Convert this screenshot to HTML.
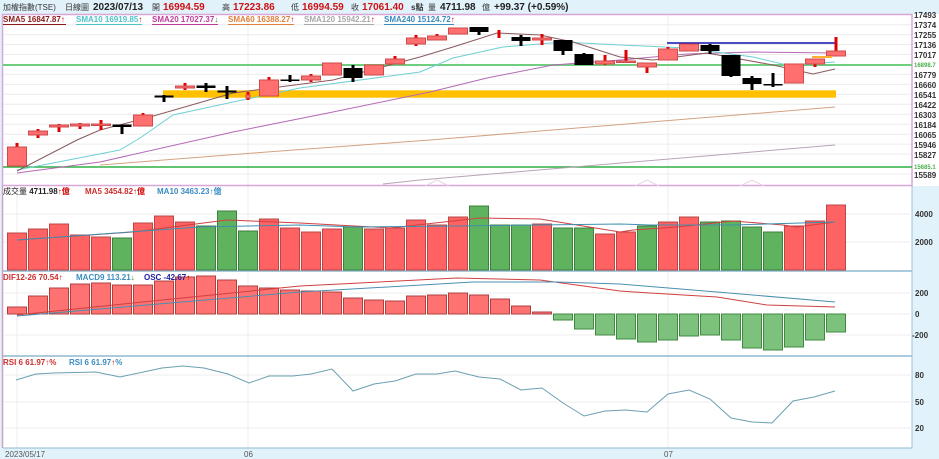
<!DOCTYPE html>
<html><head><meta charset="utf-8"><style>
body{margin:0;width:939px;height:459px;overflow:hidden;background:#e2f2fb;font-family:"Liberation Sans","Noto Sans CJK TC",sans-serif}
svg{position:absolute;left:0;top:0}
</style></head><body>
<svg width="939" height="459" viewBox="0 0 939 459" xmlns="http://www.w3.org/2000/svg" font-family="Liberation Sans, Noto Sans CJK TC, sans-serif">
<rect x="0" y="0" width="939" height="459" fill="#e2f2fb"/>
<rect x="3" y="14" width="936" height="172" fill="#fff"/>
<rect x="3" y="186" width="909" height="262" fill="#fff"/>
<line x1="912" y1="186" x2="912" y2="448" stroke="#9cc3d8" stroke-width="1"/>
<g stroke="#ececec" stroke-width="1">
<line x1="3" y1="24.7" x2="912" y2="24.7"/><line x1="3" y1="34.6" x2="912" y2="34.6"/><line x1="3" y1="44.6" x2="912" y2="44.6"/><line x1="3" y1="54.5" x2="912" y2="54.5"/><line x1="3" y1="74.4" x2="912" y2="74.4"/><line x1="3" y1="84.4" x2="912" y2="84.4"/><line x1="3" y1="94.3" x2="912" y2="94.3"/><line x1="3" y1="104.3" x2="912" y2="104.3"/><line x1="3" y1="114.3" x2="912" y2="114.3"/><line x1="3" y1="124.2" x2="912" y2="124.2"/><line x1="3" y1="134.2" x2="912" y2="134.2"/><line x1="3" y1="144.1" x2="912" y2="144.1"/><line x1="3" y1="154.1" x2="912" y2="154.1"/><line x1="3" y1="174" x2="912" y2="174"/>
<line x1="3" y1="214" x2="912" y2="214"/><line x1="3" y1="242" x2="912" y2="242"/>
<line x1="3" y1="293" x2="912" y2="293"/><line x1="3" y1="314" x2="912" y2="314"/><line x1="3" y1="335" x2="912" y2="335"/>
<line x1="3" y1="375" x2="912" y2="375"/><line x1="3" y1="402" x2="912" y2="402"/><line x1="3" y1="428" x2="912" y2="428"/>
<line x1="17" y1="186" x2="17" y2="448"/><line x1="248" y1="14" x2="248" y2="448"/><line x1="668" y1="14" x2="668" y2="448"/>
</g>
<rect x="2.5" y="14.5" width="909.5" height="171" fill="none" stroke="#d9a6d8" stroke-width="1.5"/>
<line x1="3" y1="271" x2="912" y2="271" stroke="#8fb9d0" stroke-width="1.5"/>
<line x1="3" y1="356" x2="912" y2="356" stroke="#8fb9d0" stroke-width="1.5"/>
<line x1="3" y1="448" x2="912" y2="448" stroke="#8fb9d0" stroke-width="1"/>
<line x1="2.5" y1="186" x2="2.5" y2="448" stroke="#d0a0c0" stroke-width="1.5"/>

<rect x="163" y="90.3" width="673" height="7.4" fill="#ffc000"/>
<line x1="3" y1="65" x2="912" y2="65" stroke="#6fcf7f" stroke-width="2"/>
<line x1="3" y1="167" x2="912" y2="167" stroke="#2fb040" stroke-width="1.5"/>
<line x1="667" y1="43" x2="836" y2="43" stroke="#1010b0" stroke-width="1.5"/>

<g fill="none" stroke-width="1">
<polyline stroke="#b9a3b6" points="383,184 420,180 835,145"/>
<polyline stroke="#d4a283" points="100,165 267,152 430,140 835,107"/>
<polyline stroke="#b569b5" points="17,173 100,162 233,132 333,112 430,92 487,78 553,65 620,60 687,54 753,52 835,53"/>
<polyline stroke="#6fcfd6" points="17,170 120,150 140,138 173,115 233,102 300,88 420,72 453,58 503,47 563,42 620,45 687,48 753,57 787,65 835,62"/>
<polyline stroke="#8a5a5e" points="17,171 77,140 100,130 150,117 233,93 333,80 420,57 453,47 497,33 540,35 573,42 620,57 653,60 707,53 773,65 813,74 835,69"/>
</g>
<g fill="none" stroke="#e8d0e8" stroke-width="1"><polyline points="425,186 437,180 449,186"/><polyline points="635,186 647,180 659,186"/><polyline points="740,186 752,180 764,186"/></g>

<g stroke-width="3">
<line x1="17" y1="143" x2="17" y2="166" stroke="#e00000"/>
<line x1="38" y1="129" x2="38" y2="138" stroke="#e00000"/>
<line x1="59" y1="124" x2="59" y2="132" stroke="#e00000"/>
<line x1="80" y1="123" x2="80" y2="129" stroke="#e00000"/>
<line x1="101" y1="120" x2="101" y2="130" stroke="#e00000"/>
<line x1="122" y1="125" x2="122" y2="134" stroke="#000"/>
<line x1="143" y1="113" x2="143" y2="126" stroke="#e00000"/>
<line x1="164" y1="95" x2="164" y2="102" stroke="#000"/>
<line x1="185" y1="83" x2="185" y2="90" stroke="#e00000"/>
<line x1="206" y1="83" x2="206" y2="92" stroke="#000"/>
<line x1="227" y1="86" x2="227" y2="99" stroke="#000"/>
<line x1="248" y1="92" x2="248" y2="100" stroke="#e00000"/>
<line x1="269" y1="77" x2="269" y2="96" stroke="#e00000"/>
<line x1="290" y1="75" x2="290" y2="82" stroke="#000"/>
<line x1="311" y1="74" x2="311" y2="82" stroke="#e00000"/>
<line x1="353" y1="65" x2="353" y2="82" stroke="#000"/>
<line x1="395" y1="56" x2="395" y2="64" stroke="#e00000"/>
<line x1="416" y1="35" x2="416" y2="46" stroke="#e00000"/>
<line x1="437" y1="34" x2="437" y2="40" stroke="#e00000"/>
<line x1="479" y1="27" x2="479" y2="35" stroke="#000"/>
<line x1="521" y1="35" x2="521" y2="46" stroke="#000"/>
<line x1="542" y1="34" x2="542" y2="45" stroke="#e00000"/>
<line x1="563" y1="40" x2="563" y2="55" stroke="#000"/>
<line x1="584" y1="53" x2="584" y2="65" stroke="#000"/>
<line x1="605" y1="55" x2="605" y2="65" stroke="#e00000"/>
<line x1="626" y1="50" x2="626" y2="63" stroke="#e00000"/>
<line x1="647" y1="63" x2="647" y2="73" stroke="#e00000"/>
<line x1="668" y1="47" x2="668" y2="60" stroke="#e00000"/>
<line x1="710" y1="44" x2="710" y2="54" stroke="#000"/>
<line x1="731" y1="55" x2="731" y2="77" stroke="#000"/>
<line x1="752" y1="76" x2="752" y2="90" stroke="#000"/>
<line x1="773" y1="73" x2="773" y2="87" stroke="#000"/>
<line x1="815" y1="59" x2="815" y2="67" stroke="#e00000"/>
<line x1="836" y1="37" x2="836" y2="56" stroke="#e00000"/>
<line x1="499" y1="30" x2="499" y2="38" stroke="#e00000"/>
</g>
<g fill="#ff6f6f" stroke="#cf4a4a" stroke-width="1">
<rect x="7.5" y="147" width="19" height="19"/>
<rect x="28.5" y="131" width="19" height="4"/>
<rect x="49.5" y="125" width="19" height="2"/>
<rect x="70.5" y="124" width="19" height="2"/>
<rect x="91.5" y="124" width="19" height="1.5"/>
<rect x="133.5" y="115" width="19" height="11"/>
<rect x="175.5" y="86" width="19" height="2"/>
<rect x="246" y="95" width="4" height="3"/>
<rect x="259.5" y="80" width="19" height="16"/>
<rect x="301.5" y="76" width="19" height="4"/>
<rect x="322.5" y="63" width="19" height="12"/>
<rect x="364.5" y="65" width="19" height="10"/>
<rect x="385.5" y="59" width="19" height="5"/>
<rect x="406.5" y="38" width="19" height="6"/>
<rect x="427.5" y="36" width="19" height="4"/>
<rect x="448.5" y="28" width="19" height="6"/>
<rect x="532.5" y="38" width="19" height="2"/>
<rect x="595.5" y="61" width="19" height="3"/>
<rect x="616.5" y="61" width="19" height="1.5"/>
<rect x="637.5" y="63" width="19" height="4"/>
<rect x="658.5" y="49" width="19" height="11"/>
<rect x="679.5" y="44" width="19" height="7"/>
<rect x="784.5" y="64" width="19" height="19"/>
<rect x="805.5" y="59" width="19" height="5"/>
<rect x="826.5" y="51" width="19" height="5"/>
</g>
<rect x="812" y="56" width="20" height="2" fill="#ffb030"/>
<g fill="#000">
<rect x="112.5" y="124.5" width="19" height="2.5"/>
<rect x="154.5" y="95.5" width="19" height="2"/>
<rect x="196.5" y="85.5" width="19" height="2.5"/>
<rect x="217.5" y="90.5" width="19" height="2"/>
<rect x="280.5" y="79.5" width="19" height="1.5"/>
<rect x="343.5" y="68" width="19" height="10"/>
<rect x="469.5" y="27" width="19" height="5"/>
<rect x="511.5" y="37" width="19" height="4"/>
<rect x="553.5" y="40" width="19" height="11"/>
<rect x="574.5" y="54" width="19" height="11"/>
<rect x="700.5" y="45" width="19" height="6"/>
<rect x="721.5" y="55" width="19" height="21"/>
<rect x="742.5" y="78" width="19" height="6"/>
<rect x="763.5" y="84" width="19" height="1.5"/>
</g>

<g stroke-width="1">
<g fill="#ff6262" stroke="#b84848">
<rect x="7.5" y="233" width="19" height="37"/><rect x="28.5" y="229" width="19" height="41"/><rect x="49.5" y="224" width="19" height="46"/><rect x="70.5" y="235" width="19" height="35"/><rect x="91.5" y="237" width="19" height="33"/>
<rect x="133.5" y="223" width="19" height="47"/><rect x="154.5" y="216" width="19" height="54"/><rect x="175.5" y="222" width="19" height="48"/>
<rect x="259.5" y="219" width="19" height="51"/><rect x="280.5" y="228" width="19" height="42"/><rect x="301.5" y="232" width="19" height="38"/><rect x="322.5" y="229" width="19" height="41"/>
<rect x="364.5" y="229" width="19" height="41"/><rect x="385.5" y="228" width="19" height="42"/><rect x="406.5" y="220" width="19" height="50"/><rect x="427.5" y="225" width="19" height="45"/><rect x="448.5" y="217" width="19" height="53"/>
<rect x="532.5" y="224" width="19" height="46"/><rect x="595.5" y="234" width="19" height="36"/><rect x="616.5" y="232" width="19" height="38"/>
<rect x="658.5" y="222" width="19" height="48"/><rect x="679.5" y="217" width="19" height="53"/>
<rect x="784.5" y="226" width="19" height="44"/><rect x="805.5" y="221" width="19" height="49"/><rect x="826.5" y="205" width="19" height="65"/>
</g>
<g fill="#5fb35f" stroke="#3f7f3f">
<rect x="112.5" y="238" width="19" height="32"/><rect x="196.5" y="226" width="19" height="44"/><rect x="217.5" y="211" width="19" height="59"/><rect x="238.5" y="231" width="19" height="39"/>
<rect x="343.5" y="227" width="19" height="43"/><rect x="469.5" y="206" width="19" height="64"/><rect x="490.5" y="225" width="19" height="45"/><rect x="511.5" y="225" width="19" height="45"/>
<rect x="553.5" y="228" width="19" height="42"/><rect x="574.5" y="228" width="19" height="42"/><rect x="637.5" y="226" width="19" height="44"/>
<rect x="700.5" y="222" width="19" height="48"/><rect x="721.5" y="221" width="19" height="49"/><rect x="742.5" y="227" width="19" height="43"/><rect x="763.5" y="232" width="19" height="38"/>
</g>
</g>
<g fill="none" stroke-width="1">
<polyline stroke="#d04040" points="17,240 133,232 227,220 300,223 390,228 480,218 540,219 620,232 633,230 677,227 733,221 783,225 797,227 835,222"/>
<polyline stroke="#3f8fb0" points="17,240 200,227 300,225 357,227 457,226 620,224 650,225 733,225 835,222"/>
</g>

<g fill="#ff7272" stroke="#b04040" stroke-width="1">
<rect x="7.5" y="307" width="19" height="7"/><rect x="28.5" y="296" width="19" height="18"/><rect x="49.5" y="288" width="19" height="26"/><rect x="70.5" y="284" width="19" height="30"/><rect x="91.5" y="283" width="19" height="31"/><rect x="112.5" y="285" width="19" height="29"/><rect x="133.5" y="285" width="19" height="29"/><rect x="154.5" y="281" width="19" height="33"/><rect x="175.5" y="277" width="19" height="37"/><rect x="196.5" y="276" width="19" height="38"/><rect x="217.5" y="280" width="19" height="34"/><rect x="238.5" y="286" width="19" height="28"/><rect x="259.5" y="288" width="19" height="26"/><rect x="280.5" y="290" width="19" height="24"/><rect x="301.5" y="291" width="19" height="23"/><rect x="322.5" y="292" width="19" height="22"/><rect x="343.5" y="298" width="19" height="16"/><rect x="364.5" y="300" width="19" height="14"/><rect x="385.5" y="301" width="19" height="13"/><rect x="406.5" y="296" width="19" height="18"/><rect x="427.5" y="295" width="19" height="19"/><rect x="448.5" y="293" width="19" height="21"/><rect x="469.5" y="295" width="19" height="19"/><rect x="490.5" y="299" width="19" height="15"/><rect x="511.5" y="306" width="19" height="8"/><rect x="532.5" y="312" width="19" height="2"/>
</g>
<g fill="#7cc27c" stroke="#3f8a3f" stroke-width="1">
<rect x="553.5" y="314" width="19" height="6"/><rect x="574.5" y="314" width="19" height="15"/><rect x="595.5" y="314" width="19" height="21"/><rect x="616.5" y="314" width="19" height="25"/><rect x="637.5" y="314" width="19" height="28"/><rect x="658.5" y="314" width="19" height="26"/><rect x="679.5" y="314" width="19" height="22"/><rect x="700.5" y="314" width="19" height="21"/><rect x="721.5" y="314" width="19" height="26"/><rect x="742.5" y="314" width="19" height="34"/><rect x="763.5" y="314" width="19" height="36"/><rect x="784.5" y="314" width="19" height="33"/><rect x="805.5" y="314" width="19" height="26"/><rect x="826.5" y="314" width="19" height="18"/>
</g>
<g fill="none" stroke-width="1">
<polyline stroke="#d04040" points="17,315 133,303 300,286 457,278 540,280 620,291 650,293 717,297 767,305 835,307"/>
<polyline stroke="#4a8fb0" points="17,316 300,292 473,282 557,282 620,284 717,292 835,302"/>
</g>

<polyline fill="none" stroke="#6aa0b0" stroke-width="1" points="16,380 36,374 54,373 96,372 120,377 162,368 183,366 204,368 228,374 249,383 269,376 293,376 311,374 332,369 353,391 374,384 395,381 416,374 437,374 455,371 479,377 500,379 521,390 542,388 563,403 584,416 605,411 626,410 647,412 668,394 689,390 710,399 731,418 752,422 772,423 793,401 814,397 835,391"/>

<g font-size="10" font-weight="bold">
<text x="3" y="10" font-size="8" font-weight="normal" fill="#333">加權指數(TSE)</text>
<text x="65" y="10" font-size="8" font-weight="normal" fill="#333">日線圖</text>
<text x="93" y="10" fill="#222">2023/07/13</text>
<text x="152" y="10" font-size="8" font-weight="normal" fill="#333">開</text>
<text x="163" y="10" fill="#d01010">16994.59</text>
<text x="222" y="10" font-size="8" font-weight="normal" fill="#333">高</text>
<text x="233" y="10" fill="#d01010">17223.86</text>
<text x="291" y="10" font-size="8" font-weight="normal" fill="#333">低</text>
<text x="302" y="10" fill="#d01010">16994.59</text>
<text x="351" y="10" font-size="8" font-weight="normal" fill="#333">收</text>
<text x="362" y="10" fill="#d01010">17061.40</text>
<text x="411" y="10" font-size="8" fill="#333">s點</text>
<text x="428" y="10" font-size="8" font-weight="normal" fill="#333">量</text>
<text x="440" y="10" fill="#222">4711.98</text>
<text x="482" y="10" font-size="8" font-weight="normal" fill="#333">億</text>
<text x="494" y="10" fill="#222">+99.37 (+0.59%)</text>
</g>
<g font-size="8" font-weight="bold">
<text x="3" y="22" fill="#8b1a1a">SMA5 16847.87<tspan fill="#d00000">↑</tspan></text>
<text x="76" y="22" fill="#4cc4cc">SMA10 16919.85<tspan fill="#d00000">↑</tspan></text>
<text x="152" y="22" fill="#c03c9c">SMA20 17027.37<tspan fill="#1a9a1a">↓</tspan></text>
<text x="228" y="22" fill="#e0803c">SMA60 16388.27<tspan fill="#d00000">↑</tspan></text>
<text x="304" y="22" fill="#a8a8a8">SMA120 15942.21<tspan fill="#d00000">↑</tspan></text>
<text x="384" y="22" fill="#3c8cc0">SMA240 15124.72<tspan fill="#d00000">↑</tspan></text>
</g>
<g stroke-width="1"><line x1="3" y1="24.5" x2="66" y2="24.5" stroke="#8b1a1a"/><line x1="76" y1="24.5" x2="142" y2="24.5" stroke="#4cc4cc"/><line x1="152" y1="24.5" x2="218" y2="24.5" stroke="#c03c9c"/><line x1="228" y1="24.5" x2="294" y2="24.5" stroke="#e0803c"/><line x1="304" y1="24.5" x2="374" y2="24.5" stroke="#a8a8a8"/><line x1="384" y1="24.5" x2="454" y2="24.5" stroke="#3c8cc0"/></g>

<g font-size="8" font-weight="bold">
<text x="3" y="194" fill="#222"><tspan font-weight="normal">成交量</tspan> 4711.98<tspan fill="#d00000">↑億</tspan></text>
<text x="85" y="194" fill="#d03030">MA5 3454.82<tspan fill="#d00000">↑億</tspan></text>
<text x="157" y="194" fill="#3c8cc0">MA10 3463.23<tspan fill="#3c8cc0">↑億</tspan></text>
<text x="3" y="280" fill="#d03030">DIF12-26 70.54<tspan fill="#d00000">↑</tspan></text>
<text x="76" y="280" fill="#3c8cc0">MACD9 113.21<tspan fill="#1a9a1a">↓</tspan></text>
<text x="144" y="280" fill="#2020a0">OSC -42.67<tspan fill="#d00000">↑</tspan></text>
<text x="3" y="365" fill="#d03030">RSI 6 61.97<tspan>↑%</tspan></text>
<text x="69" y="365" fill="#3c8cc0">RSI 6 61.97<tspan fill="#d00000">↑</tspan>%</text>
</g>

<g font-size="8" font-weight="bold" fill="#333">
<text x="914" y="18">17493</text><text x="914" y="28">17374</text><text x="914" y="38">17255</text><text x="914" y="48">17136</text><text x="914" y="58">17017</text>
<text x="914" y="67" font-size="6" fill="#4cb04c">16898.7</text>
<text x="914" y="78">16779</text><text x="914" y="88">16660</text><text x="914" y="98">16541</text><text x="914" y="108">16422</text><text x="914" y="118">16303</text><text x="914" y="128">16184</text><text x="914" y="138">16065</text><text x="914" y="148">15946</text><text x="914" y="158">15827</text>
<text x="914" y="169" font-size="6" fill="#4cb04c">15685.1</text>
<text x="914" y="178">15589</text>
<text x="915" y="217">4000</text><text x="915" y="245">2000</text>
<text x="915" y="296">200</text><text x="915" y="317">0</text><text x="912" y="338">-200</text>
<text x="915" y="378">80</text><text x="915" y="405">50</text><text x="915" y="431">20</text>
</g>
<g font-size="8" fill="#555">
<text x="5" y="457">2023/05/17</text><text x="244" y="457">06</text><text x="664" y="457">07</text>
</g>
</svg>
</body></html>
